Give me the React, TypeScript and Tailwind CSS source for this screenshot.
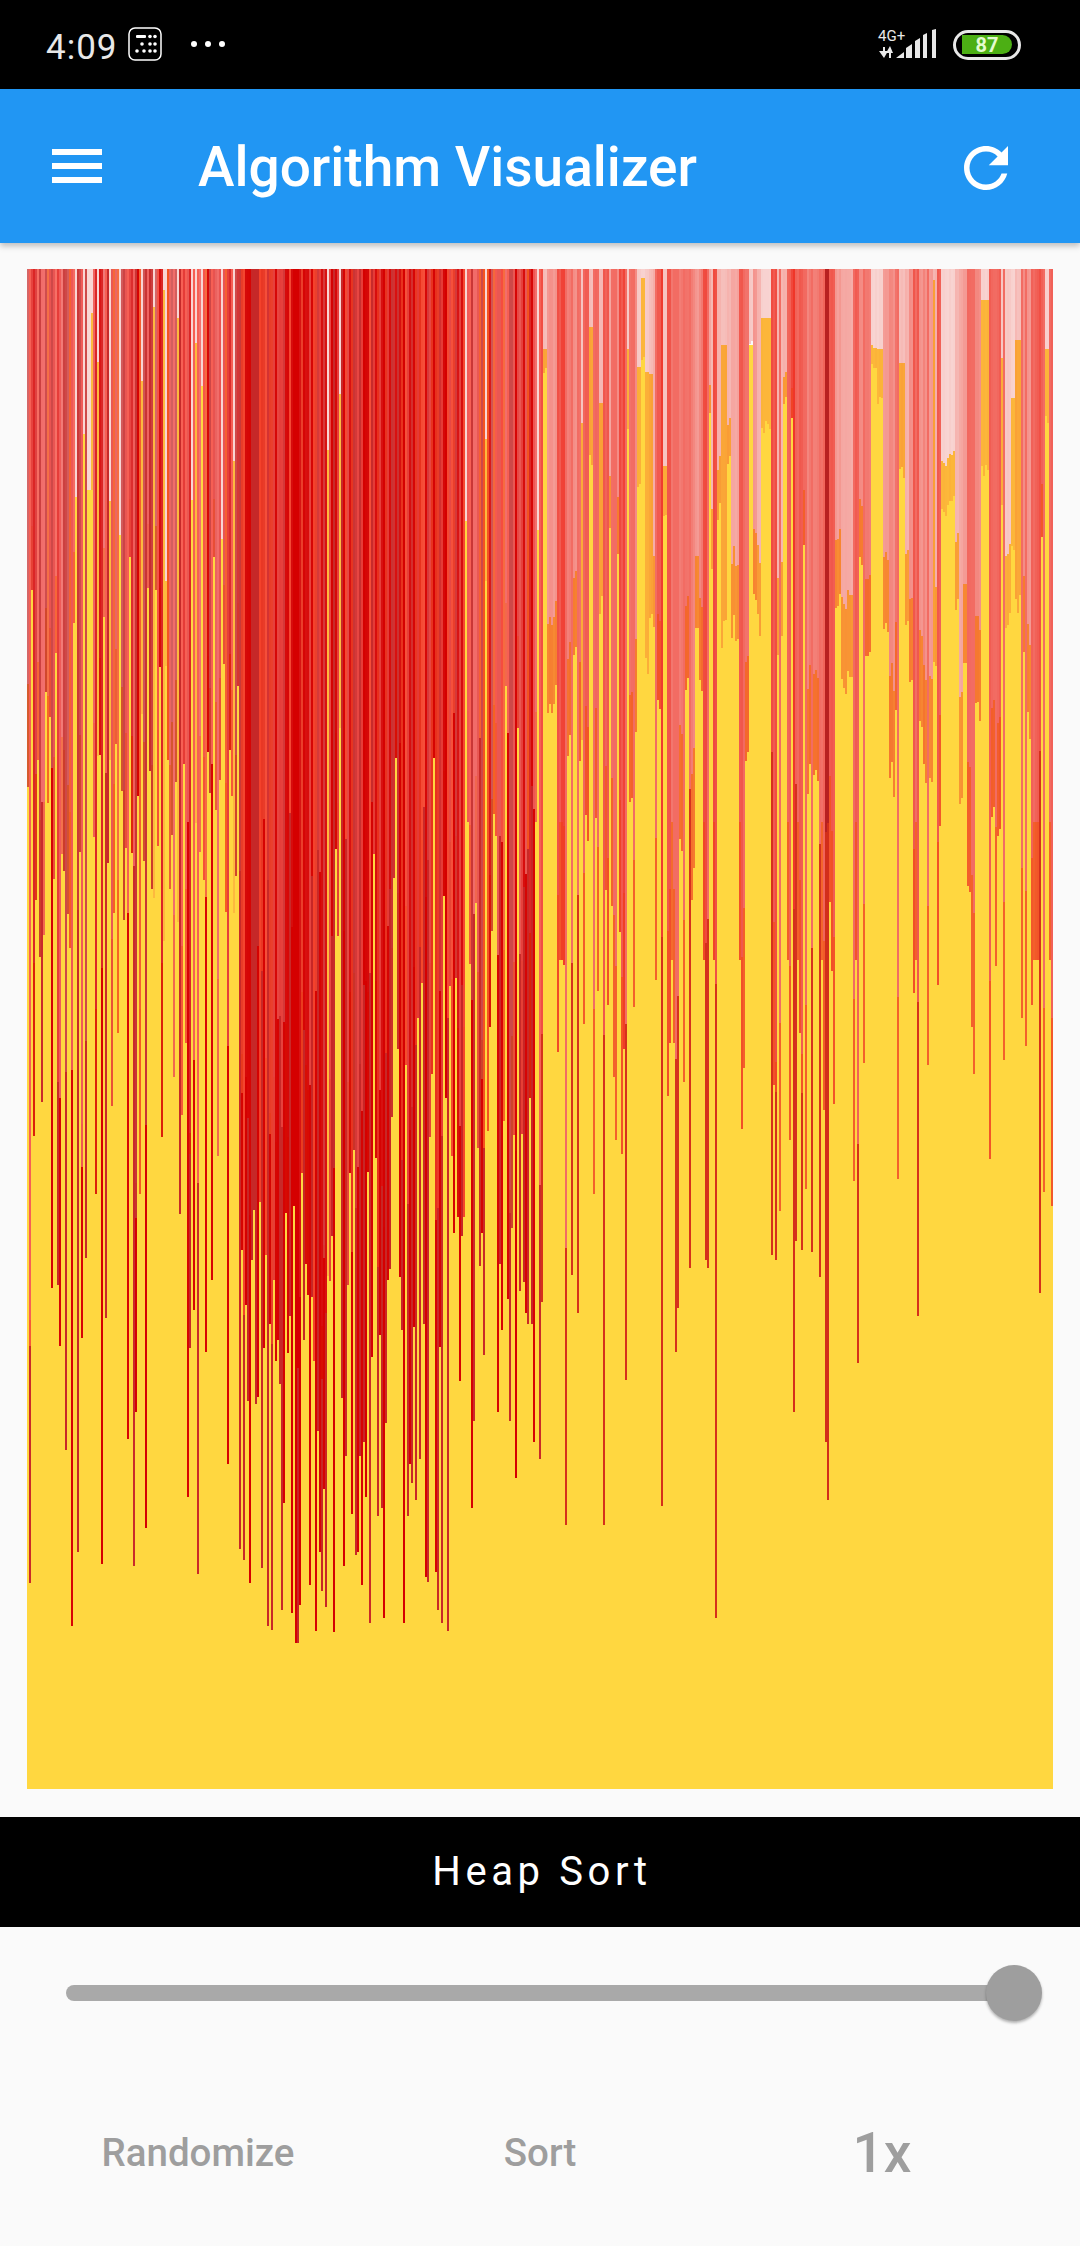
const CHART_W = 1026
const CHART_H = 1520
const BAR = 2
const COUNT = CHART_W / BAR

type Col = { top: number; depth: number; alpha: number; color: string; tail?: string }

// crop readings, x at 3x and y at 2.24x
const upperY = (z: number) => 260 + z / 2.24 - 269
const lowerY = (z: number) => 960 + z / 2.24 - 269
const leftCol = (z: number) => Math.round((20 + z / 3 - 27) / BAR)
const rightCol = (z: number) => Math.round((540 + z / 3 - 27) / BAR)

// x0, x1, top of yellow, end of red, red alpha
const RIGHT_SPANS: number[][] = [
  [0, 8, 0, 1568, 0.8], [8, 22, 200, 260, 0.3], [22, 52, 0, 1030, 0.5], [52, 58, 155, 1568, 0.8],
  [58, 76, 0, 1568, 0.85], [76, 82, 0, 750, 0.7], [82, 92, 125, 1140, 0.6], [92, 102, 0, 910, 0.5],
  [102, 110, 200, 910, 0.5], [110, 122, 0, 1145, 0.7], [122, 128, 365, 1145, 0.25], [128, 145, 0, 1320, 0.75],
  [145, 157, 150, 460, 0.3], [157, 178, 0, 1335, 0.7], [178, 187, 320, 810, 0.3], [187, 205, 0, 1415, 0.75],
  [205, 213, 180, 620, 0.4], [213, 225, 0, 1450, 0.65], [225, 237, 0, 665, 0.5], [237, 255, 0, 1520, 0.85],
  [255, 267, 200, 405, 0.25], [267, 280, 0, 1225, 0.65], [280, 292, 0, 1145, 0.55], [292, 300, 240, 535, 0.25],
  [300, 312, 40, 235, 0.2], [312, 325, 250, 935, 0.25], [325, 337, 255, 830, 0.3], [337, 349, 130, 860, 0.4],
  [349, 360, 0, 1015, 0.75], [360, 366, 0, 1568, 0.9], [366, 378, 0, 585, 0.25], [378, 392, 0, 1500, 0.8],
  [392, 410, 0, 1568, 0.65], [410, 430, 0, 1330, 0.6], [430, 450, 0, 1000, 0.65], [450, 462, 0, 1445, 0.6],
  [462, 475, 0, 860, 0.5], [475, 488, 0, 980, 0.6], [488, 502, 0, 1568, 0.85], [502, 510, 0, 350, 0.4],
  [510, 520, 0, 720, 0.35], [520, 530, 0, 1568, 0.9], [530, 545, 0, 590, 0.35], [545, 560, 190, 870, 0.3],
  [560, 572, 0, 470, 0.35], [572, 598, 0, 860, 0.42], [598, 612, 0, 1568, 0.75], [612, 625, 0, 1150, 0.65],
  [625, 638, 190, 195, 0.25], [638, 650, 0, 775, 0.5], [650, 660, 0, 855, 0.35], [660, 690, 130, 390, 0.2],
  [690, 708, 0, 1568, 0.8], [708, 728, 0, 905, 0.35], [728, 742, 0, 330, 0.35], [742, 752, 0, 1568, 0.75],
  [752, 766, 0, 380, 0.9], [766, 785, 0, 1568, 0.75], [785, 800, 0, 640, 0.75], [800, 842, 0, 1200, 0.6],
  [842, 852, 0, 1568, 0.7], [852, 864, 0, 1568, 0.95], [864, 882, 0, 1450, 0.75], [882, 905, 0, 800, 0.45],
  [905, 938, 100, 990, 0.4], [938, 956, 0, 1568, 0.75], [956, 975, 0, 720, 0.55], [975, 992, 0, 930, 0.6],
  [992, 1010, 0, 250, 0.2], [1010, 1030, 200, 325, 0.2], [1030, 1048, 0, 850, 0.45], [1048, 1062, 0, 1220, 0.55],
  [1062, 1078, 0, 1080, 0.65], [1078, 1092, 230, 500, 0.3], [1092, 1105, 0, 835, 0.35], [1105, 1120, 0, 950, 0.5],
  [1120, 1135, 0, 1568, 0.75], [1135, 1150, 0, 1060, 0.5], [1150, 1165, 0, 1190, 0.55], [1165, 1178, 0, 1190, 0.5],
  [1178, 1190, 45, 930, 0.35], [1190, 1203, 0, 1330, 0.75], [1203, 1222, 0, 600, 0.2], [1222, 1245, 0, 570, 0.2],
  [1245, 1258, 0, 790, 0.35], [1258, 1270, 240, 1280, 0.4], [1270, 1282, 245, 925, 0.5], [1282, 1300, 0, 1515, 0.75],
  [1300, 1325, 0, 1045, 0.55], [1325, 1345, 90, 490, 0.2], [1345, 1355, 0, 1568, 0.8], [1355, 1380, 0, 1330, 0.75],
  [1380, 1395, 220, 550, 0.25], [1395, 1410, 0, 850, 0.25], [1410, 1425, 310, 670, 0.2], [1425, 1440, 180, 800, 0.3],
  [1440, 1455, 130, 940, 0.55], [1455, 1470, 130, 1100, 0.5], [1470, 1480, 140, 1100, 0.7], [1480, 1495, 0, 1568, 0.75],
  [1495, 1508, 0, 650, 0.8], [1508, 1525, 200, 370, 0.2], [1525, 1545, 0, 1568, 0.75],
]

// x, y of the red lines that reach past y=960
const LEFT_LINES = [
  28, 1395, 40, 395, 60, 728, 65, 318, 90, 1455, 95, 735, 110, 728, 114, 865, 133, 1098, 151, 1492, 170, 1326, 182, 846,
  194, 668, 222, 365, 225, 525, 243, 1352, 256, 802, 275, 328, 293, 163, 318, 1074, 336, 1358, 342, 1012, 354, 525,
  373, 1272, 422, 396, 459, 261, 477, 568, 483, 348, 495, 187, 502, 1203, 508, 870, 520, 785, 533, 1376, 552, 877,
  570, 1315, 575, 716, 588, 440, 618, 1130, 656, 1320, 662, 650, 668, 1345, 675, 773, 680, 988, 687, 1395, 705, 995,
  711, 978, 723, 1363, 730, 870, 742, 1492, 748, 815, 754, 1500, 768, 852, 775, 950, 780, 1296, 785, 1456, 791, 1216,
  804, 797, 810, 1462, 822, 1530, 825, 1530, 828, 1530, 834, 1444, 846, 852, 864, 1400, 870, 755, 883, 1504, 890, 1056,
  896, 1326, 902, 1413, 908, 1186, 914, 1450, 930, 540, 934, 618, 938, 1505, 963, 982, 969, 1358, 975, 1110, 993, 1240,
  1006, 1332, 1013, 1326, 1019, 1110, 1025, 1400, 1031, 1080, 1037, 1203, 1049, 1486, 1055, 890, 1068, 1246, 1074, 840,
  1081, 1228, 1087, 1474, 1092, 1036, 1100, 716, 1106, 692, 1112, 352, 1130, 200, 1136, 710, 1142, 828, 1148, 1486,
  1160, 1246, 1166, 1130, 1172, 1172, 1178, 822, 1185, 1210, 1190, 130, 1196, 1118, 1203, 52, 1210, 816, 1216, 1382,
  1222, 1394, 1228, 396, 1234, 255, 1245, 1370, 1252, 1456, 1258, 866, 1265, 1486, 1277, 310, 1283, 1504, 1290, 440,
  1296, 1098, 1301, 612, 1308, 576, 1314, 944, 1320, 618, 1326, 575, 1345, 8, 1351, 1228, 1357, 1032, 1370, 420,
  1376, 686, 1382, 612, 1388, 884, 1400, 383, 1406, 150, 1431, 1012, 1437, 680, 1443, 828, 1449, 360, 1462, 760,
  1468, 1032, 1474, 600, 1480, 392, 1486, 1160, 1498, 742, 1504, 390, 1510, 722, 1516, 790, 1522, 816, 1528, 310,
  1534, 816, 1541, 1080, 1554, 1117,
]
const RIGHT_LINES = [
  5, 767, 48, 205, 68, 12, 73, 1265, 92, 705, 110, 790, 128, 144, 159, 525, 172, 70, 190, 1265, 203, 100, 216, 261,
  222, 403, 240, 435, 246, 199, 252, 940, 277, 106, 345, 45, 362, 1222, 381, 305, 386, 187, 400, 187, 405, 877,
  411, 779, 430, 274, 449, 691, 492, 673, 498, 691, 522, 1474, 603, 379, 608, 242, 695, 661, 701, 280, 707, 673,
  719, 562, 744, 403, 756, 1013, 762, 630, 775, 163, 781, 649, 793, 514, 812, 655, 837, 711, 850, 335, 856, 1080,
  861, 1210, 874, 25, 880, 323, 941, 495, 953, 902, 971, 230, 1070, 490, 1119, 75, 1131, 797, 1162, 236, 1193, 57,
  1291, 150, 1297, 255, 1347, 445, 1365, 14, 1389, 224, 1445, 130, 1452, 193, 1470, 100, 1495, 747, 1507, 520,
  1532, 550, 1538, 38,
]

// pale stripes at the top of the left half: x, where the yellow begins
const LEFT_PALE = [
  162, 530, 187, 390, 200, 515, 206, 515, 212, 118, 230, 228, 265, 540, 297, 615, 322, 75, 365, 270, 397, 105, 428, 68,
  436, 720, 470, 130, 512, 538, 524, 185, 540, 283, 600, 625, 637, 450, 920, 425, 957, 300, 1332, 585, 1394, 400, 1548, 605,
]
// red that stops inside the upper crop: x, y
const LEFT_ENDS = [
  32, 740, 72, 968, 84, 1024, 102, 880, 122, 1330, 127, 1368, 140, 1466, 145, 1540, 158, 812, 164, 530, 176, 1325, 188, 390,
  200, 515, 206, 515, 212, 515, 230, 1110, 236, 1108, 248, 800, 265, 1120, 270, 540, 286, 1085, 297, 615, 304, 1190, 310, 1478,
  328, 665, 347, 710, 361, 1018, 380, 735, 392, 1410, 402, 740, 410, 1312, 416, 912, 436, 910, 448, 1410, 453, 1288, 465, 1170,
  488, 1128, 512, 538, 540, 283, 563, 1103, 580, 665, 594, 1165, 600, 625, 606, 905, 612, 1460, 626, 1098, 632, 1200, 644, 1380,
  650, 955, 945, 1320, 950, 1515, 957, 1048, 1060, 1330, 1118, 1385, 1122, 1115, 1238, 1115, 1270, 1425, 1332, 585, 1338, 1258,
  1362, 1440, 1394, 720, 1412, 1503, 1418, 1240, 1424, 1290, 1455, 955, 1492, 1048, 1548, 605,
]

const LIGHT = ["#d50000", "#c62828", "#e53935", "#f44336", "#f4511e", "#ef5350"]
const DARK = ["#d50000", "#c62828", "#d32f2f", "#e53935", "#d50000", "#e8301c", "#f4412a"]

function buildColumns(): Col[] {
  let seed = 4099
  const rnd = () => {
    seed = (seed * 16807) % 2147483647
    return seed / 2147483647
  }
  const cols: Col[] = []
  for (let i = 0; i < COUNT; i++) {
    const x = 27 + i * BAR
    const dense = x >= 237 && x < 395
    const mid = x >= 395 && x < 540
    const r = rnd()
    let depth = upperY(1100 + rnd() * 468)
    if (dense) depth = lowerY(400 + rnd() * 500)
    if (mid) depth = x < 464 ? lowerY(rnd() * 500) : upperY(1150 + rnd() * 418)
    const palette = dense || (mid && x < 464) ? DARK : LIGHT
    const alpha = dense || (mid && x < 464) ? 0.92 + r * 0.08 : 0.7 + r * 0.3
    cols.push({ top: 0, depth, alpha, color: palette[Math.floor(rnd() * palette.length)] })
  }

  // the deepest stripes, they read as solid colour
  for (let x = 293; x < 299; x += BAR) {
    cols[(x - 27) / BAR].color = "#d50000"
    cols[(x - 27) / BAR].alpha = 1
  }
  for (let x = 251; x < 259; x += BAR) {
    cols[(x - 27) / BAR].color = "#c62828"
    cols[(x - 27) / BAR].alpha = 1
  }

  for (let i = 0; i < LEFT_ENDS.length; i += 2) {
    const c = cols[leftCol(LEFT_ENDS[i])]
    if (c) c.depth = upperY(LEFT_ENDS[i + 1])
  }
  for (let i = 0; i < LEFT_PALE.length; i += 2) {
    const c = cols[leftCol(LEFT_PALE[i])]
    if (c) {
      c.top = upperY(LEFT_PALE[i + 1])
      c.alpha = 0.2
      c.color = "#f44336"
    }
  }
  for (const [x0, x1, top, depth, alpha] of RIGHT_SPANS) {
    for (let i = rightCol(x0); i < rightCol(x1) && i < COUNT; i++) {
      const jitter = 1 + (rnd() - 0.5) * 0.16
      const c = cols[i]
      c.top = top ? upperY(top) : 0
      c.depth = depth >= 1568 ? upperY(1568) : upperY(depth * (0.92 + rnd() * 0.08))
      c.alpha = Math.min(1, alpha * jitter)
      c.color = alpha >= 0.95 ? "#b71c1c" : "#ee2f22"
    }
  }
  for (let i = 0; i < LEFT_LINES.length; i += 2) {
    const c = cols[leftCol(LEFT_LINES[i])]
    if (c) {
      c.depth = lowerY(LEFT_LINES[i + 1])
      c.alpha = Math.max(c.alpha, 0.85)
      if (LEFT_LINES[i + 1] > 600) c.tail = i % 4 === 0 ? "#c62828" : "#d50000"
    }
  }
  for (let i = 0; i < RIGHT_LINES.length; i += 2) {
    const c = cols[rightCol(RIGHT_LINES[i])]
    if (c) {
      c.depth = lowerY(RIGHT_LINES[i + 1])
      c.alpha = Math.max(c.alpha, 0.7)
      if (RIGHT_LINES[i + 1] > 600) c.tail = "#d32f1a"
    }
  }
  return cols
}

const columns = buildColumns()

// red sits on the page colour for most of its length, only its tail runs over yellow.
// the palest stripes are the exception, yellow shows through them from their top down
const whiteTo = (c: Col) => {
  if (c.top > 0 && c.alpha < 0.35) return c.top
  return Math.max(c.top, c.depth * 0.8)
}

// start of the dark tail differs per bar so no line shows across the chart
const tailFrom = (c: Col, i: number) => c.depth * (0.45 + ((i * 37) % 40) / 100)

function Bars() {
  return (
    <svg width={CHART_W} height={CHART_H} viewBox={`0 0 ${CHART_W} ${CHART_H}`} shapeRendering="crispEdges" className="block">
      <rect width={CHART_W} height={CHART_H} fill="#ffd740" />
      {columns.map((c, i) => (
        <g key={i}>
          <rect x={i * BAR} y={0} width={BAR} height={whiteTo(c)} fill="#fafafa" />
          <rect x={i * BAR} y={0} width={BAR} height={c.depth} fill={c.color} fillOpacity={c.alpha} />
          {c.tail && <rect x={i * BAR} y={tailFrom(c, i)} width={BAR} height={c.depth - tailFrom(c, i)} fill={c.tail} fillOpacity={0.95} />}
        </g>
      ))}
    </svg>
  )
}

function StatusBar() {
  return (
    <div className="h-[89px] bg-black flex items-center pl-[46px] pr-[59px] text-white shrink-0">
      <span className="font-[Roboto,sans-serif] font-normal text-[35px] leading-none tracking-[1px] text-[#e8e8e8] mt-[5px]">4:09</span>
      <svg className="ml-[10px] w-[34px] h-[34px] mt-[-2px]" viewBox="0 0 34 34" fill="none">
        <rect x="1" y="1" width="32" height="32" rx="6" stroke="white" strokeWidth="1.5" />
        <rect x="8" y="8" width="10" height="3" rx="1" fill="white" />
        <g fill="white">
          <circle cx="22" cy="9.5" r="1.8" />
          <circle cx="27" cy="9.5" r="1.8" />
          <circle cx="22" cy="17" r="1.8" />
          <circle cx="27" cy="17" r="1.8" />
          <circle cx="14" cy="17" r="1.8" />
          <circle cx="9" cy="24" r="1.8" />
          <circle cx="16" cy="24" r="1.8" />
          <circle cx="22" cy="24" r="1.8" />
          <circle cx="27" cy="24" r="1.8" />
        </g>
      </svg>
      <div className="flex gap-[8px] ml-[29px] mt-[-1px]">
        <span className="w-[6px] h-[6px] rounded-full bg-white" />
        <span className="w-[6px] h-[6px] rounded-full bg-white" />
        <span className="w-[6px] h-[6px] rounded-full bg-white" />
      </div>
      <div className="ml-auto flex items-center gap-[15px]">
        <div className="relative w-[60px] h-[32px]">
          <span className="absolute left-0 top-[-1px] font-[Roboto,sans-serif] text-[15px] leading-[16px] text-[#e8e8e8]">4G+</span>
          <svg className="absolute left-0 top-0" width="60" height="32" viewBox="0 0 60 32" fill="#e8e8e8">
            <path d="M1 22h4v-4h2v4h3l-4 7zM8 24l4-7 3 7h-2v5h-2v-5z" />
            <path d="M18 29l8-6v6zM28 29v-10l6-4v14zM37 29V12l5-3v20zM45 29V6l4-2v25zM54 29V1l4-1v29z" />
          </svg>
        </div>
        <div className="w-[68px] h-[30px] rounded-full border-[3px] border-[#e8e8e8] flex items-center justify-center">
          <div className="w-[50px] h-[19px] rounded-r-full rounded-l-[3px] bg-[#4caf14] flex items-center justify-center font-[Roboto,sans-serif] font-bold text-[20px] leading-none text-[#e4fbd0]">
            87
          </div>
        </div>
      </div>
    </div>
  )
}

function AppBar() {
  return (
    <div className="h-[154px] bg-[#2196f3] flex items-center pl-[39px] pr-[60px] shadow-[0_3px_6px_rgba(0,0,0,0.25)] shrink-0 relative z-10">
      <div className="w-[76px] h-[34px] mt-[-1px] flex flex-col justify-between pl-[13px] shrink-0">
        <div className="h-[6px] w-[50px] bg-white" />
        <div className="h-[6px] w-[50px] bg-white" />
        <div className="h-[6px] w-[50px] bg-white" />
      </div>
      <h1 className="ml-[83px] mt-[2px] font-[Roboto,sans-serif] font-medium text-[55px] leading-none text-white">Algorithm Visualizer</h1>
      <svg className="ml-auto mt-[3px] mr-[1px] w-[66px] h-[66px]" viewBox="0 0 24 24" fill="white">
        <path d="M17.65 6.35C16.2 4.9 14.21 4 12 4c-4.42 0-7.99 3.58-7.99 8s3.57 8 7.99 8c3.73 0 6.84-2.55 7.73-6h-2.08c-.82 2.33-3.04 4-5.65 4-3.31 0-6-2.69-6-6s2.69-6 6-6c1.66 0 3.14.69 4.22 1.78L13 11h7V4l-2.35 2.35z" />
      </svg>
    </div>
  )
}

export default function App() {
  return (
    <div className="w-[1080px] h-[2246px] bg-[#fafafa] flex flex-col overflow-hidden font-[Roboto,sans-serif]">
      <StatusBar />
      <AppBar />
      <div className="pt-[26px] pl-[27px] pb-[28px]">
        <Bars />
      </div>
      <div className="h-[110px] bg-black flex items-center justify-center text-white text-[40px] tracking-[4.6px] pl-[4px] shrink-0">Heap Sort</div>
      <div className="mt-[58px] ml-[66px] w-[948px] h-[16px] rounded-l-full bg-[#a9a9a9] relative shrink-0">
        <div className="absolute right-[-28px] top-[-20px] w-[56px] h-[56px] rounded-full bg-[#9e9e9e] shadow-[0_2px_3px_rgba(0,0,0,0.3)]" />
      </div>
      <div className="mt-[100px] px-[27px] h-[104px] grid grid-cols-3 items-center text-center text-[#9e9e9e] font-medium shrink-0">
        <span className="text-[38.5px] leading-none">Randomize</span>
        <span className="text-[38.5px] leading-none">Sort</span>
        <span className="text-[55px] leading-none">1x</span>
      </div>
    </div>
  )
}
